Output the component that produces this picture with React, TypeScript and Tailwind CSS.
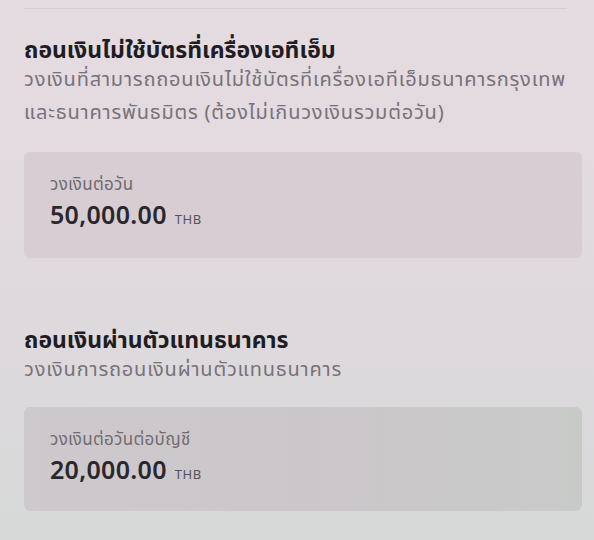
export default function App() {
  const font = { fontFamily: '"Noto Sans Thai", "Noto Sans", "DejaVu Sans", sans-serif' };
  return (
    <div
      className="w-[594px] h-[540px] overflow-hidden bg-gradient-to-b from-[#e5dce1] via-[#e0d9de] to-[#d7d9d9] text-[#222]"
      style={font}
    >
      <div className="pl-[24px] pr-[12px] pt-2">
        <div className="h-px bg-[#d6cdd2] mr-[15px]" />

        {/* ATM cardless */}
        <section className="pt-[28px]">
          <h2 className="text-[23px] font-bold leading-[28px] text-[#1f1d22]">ถอนเงินไม่ใช้บัตรที่เครื่องเอทีเอ็ม</h2>
          <p className="text-[20px] tracking-[0.8px] leading-[33px] text-[#77727a] -mt-[1px]">
            วงเงินที่สามารถถอนเงินไม่ใช้บัตรที่เครื่องเอทีเอ็มธนาคารกรุงเทพ
            <br />
            และธนาคารพันธมิตร (ต้องไม่เกินวงเงินรวมต่อวัน)
          </p>
          <div className="mt-[22px] h-[106px] rounded-md bg-[#d7cdd2] px-[26px] pt-[23px]">
            <div className="text-[17px] tracking-[0.3px] leading-[20px] text-[#6f6a70]">วงเงินต่อวัน</div>
            <div className="mt-[6px] flex items-baseline gap-[8px]">
              <span className="text-[25px] tracking-[0.3px] font-semibold leading-[30px] text-[#2a272c]">50,000.00</span>
              <span className="text-[13px] tracking-[0.5px] text-[#57525a]">THB</span>
            </div>
          </div>
        </section>

        {/* agent */}
        <section className="pt-[69px]">
          <h2 className="text-[23px] font-bold leading-[28px] text-[#1f1d22]">ถอนเงินผ่านตัวแทนธนาคาร</h2>
          <p className="text-[20px] tracking-[0.8px] leading-[33px] text-[#77727a] -mt-[1px]">วงเงินการถอนเงินผ่านตัวแทนธนาคาร</p>
          <div className="mt-[20px] h-[104px] rounded-md bg-gradient-to-r from-[#cdc9cc] via-[#cbc6ca] to-[#c8cac8] px-[26px] pt-[23px]">
            <div className="text-[17px] tracking-[0.3px] leading-[20px] text-[#716c72]">วงเงินต่อวันต่อบัญชี</div>
            <div className="mt-[6px] flex items-baseline gap-[8px]">
              <span className="text-[25px] tracking-[0.3px] font-semibold leading-[30px] text-[#2a272c]">20,000.00</span>
              <span className="text-[13px] tracking-[0.5px] text-[#57525a]">THB</span>
            </div>
          </div>
        </section>
      </div>
    </div>
  );
}
